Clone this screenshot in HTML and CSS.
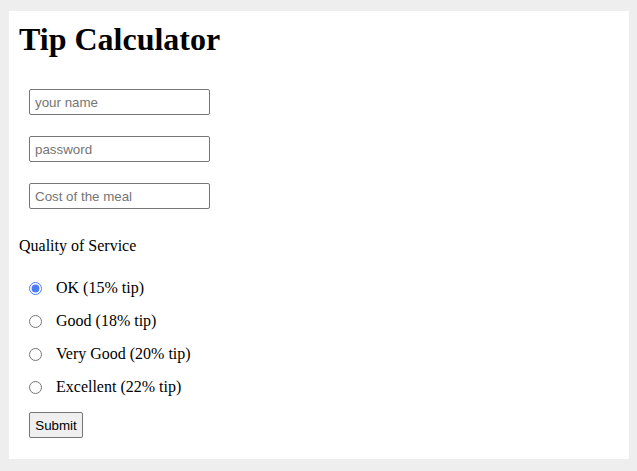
FILE: index.html
```html
<!DOCTYPE html>
<html>
<head>
<meta charset="utf-8">
<title>Tip Calculator</title>
<link rel="stylesheet" href="styles.css">
</head>
<body>
<div class="card">
  <h1 class="title">Tip Calculator</h1>
  <div class="fields">
    <input class="field" type="text" placeholder="your name">
    <input class="field" type="password" placeholder="password">
    <input class="field" type="text" placeholder="Cost of the meal">
  </div>
  <p class="quality">Quality of Service</p>
  <div class="options">
    <label class="opt"><input class="radio" type="radio" name="q" checked><span>OK (15% tip)</span></label>
    <label class="opt"><input class="radio" type="radio" name="q"><span>Good (18% tip)</span></label>
    <label class="opt"><input class="radio" type="radio" name="q"><span>Very Good (20% tip)</span></label>
    <label class="opt"><input class="radio" type="radio" name="q"><span>Excellent (22% tip)</span></label>
  </div>
  <div class="actions">
    <button class="submit" type="button">Submit</button>
  </div>
</div>
</body>
</html>
```
FILE: styles.css
```css
html, body {
  margin: 0;
  padding: 0;
}
body {
  background: #eeeeee;
  padding: 11px 8px 12px 9px;
  font-family: "Liberation Serif", "Times New Roman", serif;
  font-size: 16px;
  color: #000;
}
.card {
  background: #fff;
  padding: 10px 10px 21px 10px;
}
.title {
  margin: 0;
  font-size: 32px;
  font-weight: bold;
  line-height: 36px;
}
.fields {
  display: flex;
  flex-direction: column;
  gap: 21px;
  padding-left: 10px;
  margin-top: 32px;
}
.field {
  box-sizing: border-box;
  width: 181px;
  height: 26px;
  margin: 0;
  padding: 0 5px;
  border: 1px solid #767676;
  border-radius: 2px;
  font-family: "Liberation Sans", Arial, sans-serif;
  font-size: 13.33px;
  color: #000;
  background: #fff;
}
.field::placeholder {
  color: #757575;
}
.quality {
  margin: 28px 0 0 0;
  line-height: 18px;
}
.options {
  display: flex;
  flex-direction: column;
  gap: 13px;
  margin-top: 23px;
  padding-left: 10px;
}
.opt {
  display: flex;
  align-items: center;
  height: 20px;
}
.radio {
  margin: 0;
  width: 13px;
  height: 13px;
  accent-color: #4c7cf5;
}
.opt span {
  margin-left: 14px;
}
.actions {
  margin-top: 15px;
  padding-left: 10px;
}
.submit {
  box-sizing: border-box;
  height: 26px;
  width: 54px;
  margin: 0;
  padding: 0;
  font-family: "Liberation Sans", Arial, sans-serif;
  font-size: 13.33px;
  color: #000;
  background: #efefef;
  border: 1px solid #767676;
  border-radius: 2px;
}
```
